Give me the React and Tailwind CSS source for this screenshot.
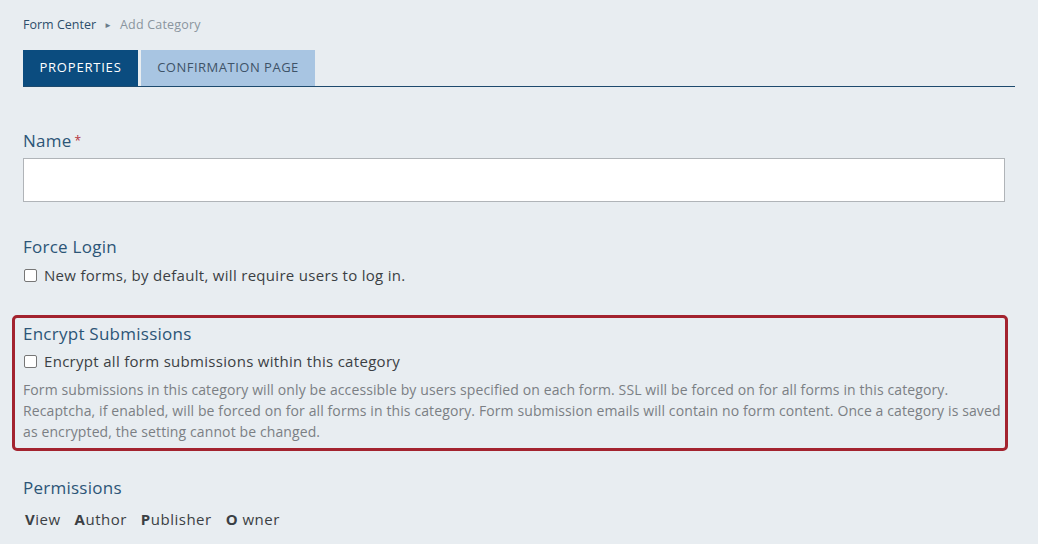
export default function App() {
  const font = { fontFamily: '"Open Sans", "Noto Sans", sans-serif' };
  return (
    <div className="min-h-[544px] w-[1038px] bg-[#e8edf1] overflow-hidden" style={font}>
      <div className="pl-[23px] pr-[23px] pt-[16px]">
        <div className="flex items-center text-[12.5px] leading-[18px] h-[18px]">
          <span className="text-[#2d4e6b]">Form Center</span>
          <span className="text-[#6b7c8c] text-[8px] mx-[8px]">►</span>
          <span className="text-[#8a959e] tracking-[0.2px]">Add Category</span>
        </div>
        <div className="mt-[16px] flex items-end gap-[3px] border-b border-[#1d4a6e] h-[37px]">
          <div className="h-[36px] w-[115px] bg-[#0b4c7f] text-white text-[13px] tracking-[0.8px] flex items-center justify-center">PROPERTIES</div>
          <div className="h-[36px] w-[174px] bg-[#a8c5e2] text-[#3e5368] text-[13px] tracking-[0.5px] flex items-center justify-center">CONFIRMATION PAGE</div>
        </div>

        <div className="mt-[42px] text-[17px] leading-[24px] text-[#2c5577] tracking-[0.25px]">
          Name<span className="text-[#b5323d] text-[12px] align-top ml-[3px]">*</span>
        </div>
        <div className="mt-[5px] w-[982px] h-[44px] bg-white border border-[#b0b4b8]"></div>

        <div className="mt-[33px] text-[17px] leading-[24px] text-[#2c5577] tracking-[0.25px]">Force Login</div>
        <label className="mt-[6px] flex items-center text-[15px] leading-[20px] text-[#3b3f44] tracking-[0.3px]">
          <span className="w-[13px] h-[13px] border border-[#767676] rounded-[2px] bg-white mr-[7px] ml-[1px]"></span>
          New forms, by default, will require users to log in.
        </label>

        <div className="mt-[30px] -ml-[11px] w-[996px] border-[3px] border-[#a3232f] rounded-[5px] pl-[8px] pt-[4px] pb-[6px]">
          <div className="text-[17px] leading-[24px] text-[#2c5577] tracking-[0.25px]">Encrypt Submissions</div>
          <label className="mt-[5px] flex items-center text-[15px] leading-[20px] text-[#3b3f44] tracking-[0.3px]">
            <span className="w-[13px] h-[13px] border border-[#767676] rounded-[2px] bg-white mr-[7px] ml-[1px]"></span>
            Encrypt all form submissions within this category
          </label>
          <p className="mt-[8px] text-[14px] leading-[21px] text-[#7b7f84] tracking-[0.11px]">
            Form submissions in this category will only be accessible by users specified on each form. SSL will be forced on for all forms in this category. Recaptcha, if enabled, will be forced on for all forms in this category. Form submission emails will contain no form content. Once a category is saved as encrypted, the setting cannot be changed.
          </p>
        </div>

        <div className="mt-[25px] text-[17px] leading-[24px] text-[#2c5577] tracking-[0.25px]">Permissions</div>
        <div className="mt-[9px] flex gap-[14px] text-[15px] leading-[20px] text-[#3b3f44] pl-[2px] tracking-[0.5px]">
          <span><b className="font-bold">V</b>iew</span>
          <span><b className="font-bold">A</b>uthor</span>
          <span><b className="font-bold">P</b>ublisher</span>
          <span><b className="font-bold">O</b> wner</span>
        </div>
      </div>
    </div>
  );
}
